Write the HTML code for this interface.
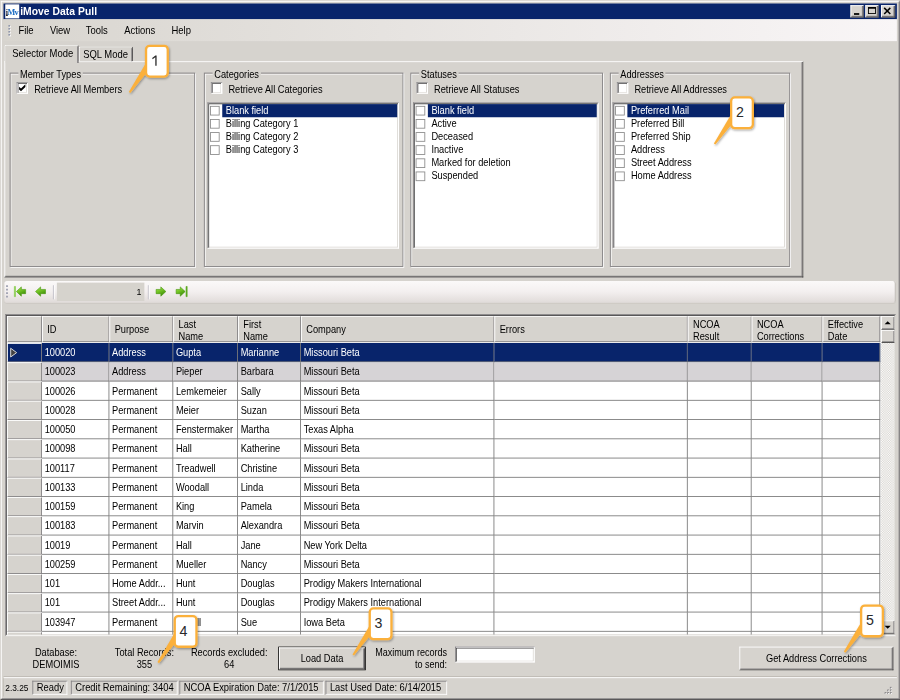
<!DOCTYPE html>
<html>
<head>
<meta charset="utf-8">
<title>iMove Data Pull</title>
<style>
html,body{margin:0;padding:0;}
body{width:900px;height:700px;overflow:hidden;background:#d6d3ce;position:relative;}
#w{position:absolute;left:0;top:0;width:1029px;height:800px;transform:scale(0.875);transform-origin:0 0;background:#d6d3ce;overflow:hidden;
 font-family:"Liberation Sans",sans-serif;font-size:11.5px;letter-spacing:0;color:#000;}
#ov{position:absolute;left:0;top:0;width:900px;height:700px;overflow:hidden;}
.a{position:absolute;white-space:nowrap;}
.t{position:absolute;white-space:nowrap;line-height:13px;transform:scaleX(0.92);transform-origin:0 50%;}
.tah{font-size:12px;transform:scaleX(0.9);}
/* 3d borders */
.raised{box-sizing:border-box;border-left:1px solid #fff;border-top:1px solid #fff;border-right:1px solid #424142;border-bottom:1px solid #424142;box-shadow:inset -1px -1px 0 #848284;background:#d6d3ce;}
.sunken{box-sizing:border-box;border-left:1px solid #848284;border-top:1px solid #848284;border-right:1px solid #fff;border-bottom:1px solid #fff;box-shadow:inset 1px 1px 0 #424142, inset -1px -1px 0 #d6d3ce;background:#fff;}
#title{left:4px;top:4px;width:1021px;height:18px;background:#08246b;}
#menu{left:4px;top:22px;width:1021px;height:25px;background:linear-gradient(to right,#d8d5cf 0%,#f9f6f7 100%);}
.tab{position:absolute;box-sizing:border-box;background:#d6d3ce;border-left:1px solid #fff;border-top:1px solid #fff;border-right:1px solid #424142;border-radius:2px 2px 0 0;}
.tab i{position:absolute;right:0;top:1px;bottom:0;width:1px;background:#848284;}
.gb{position:absolute;box-sizing:border-box;border:1px solid #848284;box-shadow:1px 1px 0 #fff, inset 1px 1px 0 #fff;}
.gl{position:absolute;white-space:nowrap;line-height:13px;background:#d6d3ce;padding:0 2px;transform:scaleX(0.92);transform-origin:0 50%;}
.li{position:absolute;left:1px;right:1px;height:15px;}
.li b{position:absolute;left:1px;top:2px;width:11px;height:11px;box-sizing:border-box;border:1px solid #8c8c8c;background:#fff;}
.li span{position:absolute;left:19px;top:1px;line-height:13px;white-space:nowrap;transform:scaleX(0.92);transform-origin:0 50%;}
.li.sel em{position:absolute;left:15px;right:0;top:0;bottom:0;background:#08246b;}
.li.sel span{color:#fff;}
#nav{left:5px;top:321px;width:1019px;height:25px;border-radius:3px;background:linear-gradient(to bottom,#fbf9f9 0%,#f3efef 50%,#e0dbd9 100%);box-shadow:0 1px 0 #ccc8c2, inset -1.5px 0 0 #c9c5c0;}
#grid{left:6px;top:359px;width:1018px;height:368px;box-sizing:border-box;overflow:hidden;border-left:1px solid #848284;border-top:1px solid #848284;border-right:1px solid #d6d3ce;border-bottom:1px solid #fff;}
#gin{left:0;top:0;right:0;bottom:0;border-left:1px solid #424142;border-top:1px solid #424142;border-right:1px solid #d6d3ce;border-bottom:1px solid #d6d3ce;background:#fff;overflow:hidden;}
.hc{position:absolute;top:0;height:30px;box-sizing:border-box;background:#d6d3ce;border-left:1px solid #fff;border-top:1px solid #fff;border-right:1px solid #848284;border-bottom:1px solid #848284;}
.hc .t{left:5px;line-height:13px;}
.row{position:absolute;left:0;width:998px;height:22px;}
.rh{position:absolute;left:0;top:0;width:40px;height:22px;box-sizing:border-box;background:#d6d3ce;border-left:1px solid #fff;border-top:1px solid #fff;border-right:1px solid #848284;border-bottom:1px solid #848284;}
.c{position:absolute;top:0;height:22px;box-sizing:border-box;border-right:1px solid #7b7b7b;border-bottom:1px solid #7b7b7b;}
.c span{position:absolute;left:3.3px;top:5.4px;line-height:13px;white-space:nowrap;transform:scaleX(0.92);transform-origin:0 50%;}
.row.sel .c{background:#08246b;color:#fff;}
.row.sel .rh{background:#08246b;}
.row.alt .c{background:#d6d3d6;}
#sb{right:-0.6px;top:0;width:16px;bottom:0;background:repeating-conic-gradient(#fff 0% 25%, #d6d3ce 0% 50%) 0 0/2px 2px;}
.ctr{position:absolute;text-align:center;line-height:13px;white-space:nowrap;transform:scaleX(0.92);transform-origin:50% 50%;}
#status{left:4px;top:774px;width:1021px;height:22px;border-top:1px solid #fff;box-shadow:0 -1px 0 #b4b0a8;}
.sp{position:absolute;top:2.5px;height:16px;box-sizing:border-box;border-left:1px solid #848284;border-top:1px solid #848284;border-right:1px solid #fff;border-bottom:1px solid #fff;}
svg{position:absolute;overflow:visible;}
</style>
</head>
<body>
<div id="w">
<div class="a" style="left:0;top:0;width:1029px;height:800px;box-sizing:border-box;border-left:1px solid #d6d3ce;border-top:1px solid #d6d3ce;border-right:1px solid #424142;border-bottom:1px solid #424142;"></div>
<div class="a" style="left:1px;top:1px;width:1027px;height:798px;box-sizing:border-box;border-left:1px solid #fff;border-top:1px solid #fff;border-right:1px solid #848284;border-bottom:1px solid #848284;"></div>
<div class="a" id="title">
 <div class="a" style="left:2px;top:1px;width:16px;height:16px;background:#fff;"></div>
 <svg style="left:2px;top:1px" width="16" height="16"><text x="0.6" y="12.3" font-family="Liberation Serif, serif" font-weight="bold" font-size="9.4" fill="#1c6cc4" letter-spacing="-0.7"><tspan fill="#223">i</tspan>Mv</text><rect x="0.8" y="12.2" width="2.2" height="1" fill="#111"/></svg>
 <div class="t" style="left:19px;top:2.5px;color:#fff;font-weight:bold;font-size:11.8px;letter-spacing:0.05px;transform:none;">iMove Data Pull</div>
 <div class="a raised" style="left:968px;top:2px;width:15px;height:13.5px;"></div>
 <div class="a raised" style="left:985px;top:2px;width:15px;height:13.5px;"></div>
 <div class="a raised" style="left:1002.5px;top:2px;width:16px;height:13.5px;"></div>
 <svg style="left:968px;top:2px" width="52" height="14"><rect x="4" y="9" width="6" height="2" fill="#000"/><rect x="20.5" y="2.5" width="8" height="7" fill="none" stroke="#000" stroke-width="1"/><rect x="20" y="2" width="9" height="2" fill="#000"/><path d="M38.5 3 L45.5 10 M45.5 3 L38.5 10" stroke="#000" stroke-width="1.7" fill="none"/></svg>
</div>
<div class="a" id="menu">
 <svg style="left:0;top:0" width="12" height="25"><g fill="#fff"><rect x="6.6" y="7.6" width="1.8" height="1.8"/><rect x="6.6" y="11" width="1.8" height="1.8"/><rect x="6.6" y="14.4" width="1.8" height="1.8"/><rect x="6.6" y="17.8" width="1.8" height="1.8"/></g><g fill="#8f96aa"><rect x="5.6" y="6.6" width="1.9" height="1.9"/><rect x="5.6" y="10" width="1.9" height="1.9"/><rect x="5.6" y="13.4" width="1.9" height="1.9"/><rect x="5.6" y="16.8" width="1.9" height="1.9"/></g></svg>
 <div class="t tah" style="left:16.5px;top:7px">File</div>
 <div class="t tah" style="left:52.5px;top:7px">View</div>
 <div class="t tah" style="left:93.5px;top:7px">Tools</div>
 <div class="t tah" style="left:138px;top:7px">Actions</div>
 <div class="t tah" style="left:192px;top:7px">Help</div>
</div>
<div class="a" style="left:5px;top:70px;width:913px;height:247px;box-sizing:border-box;border-left:1px solid #fff;border-top:1px solid #fff;border-right:1px solid #424142;border-bottom:1px solid #424142;box-shadow:inset -1px -1px 0 #848284;"></div>
<div class="tab" style="left:5px;top:51px;width:85px;height:21px;"><i></i><div class="t tah" style="left:7.5px;top:3px">Selector Mode</div></div>
<div class="tab" style="left:90px;top:53px;width:62px;height:17px;"><i></i><div class="t tah" style="left:4px;top:2px">SQL Mode</div></div>
<div class="gb" style="left:11px;top:83px;width:212px;height:222px"></div>
<div class="gl" style="left:21px;top:79px">Member Types</div>
<div class="a sunken" style="left:19px;top:94px;width:13px;height:13px;"></div>
<svg style="left:19px;top:94px" width="13" height="13"><path d="M2.8 5 L5 7.2 L10 2.2 L10 5.4 L5 10.4 L2.8 8.2 Z" fill="#000"/></svg>
<div class="t" style="left:39px;top:96px">Retrieve All Members</div>
<div class="gb" style="left:233px;top:83px;width:228px;height:222px"></div>
<div class="gl" style="left:243px;top:79px">Categories</div>
<div class="a sunken" style="left:240.5px;top:94px;width:13px;height:13px;"></div>
<div class="t" style="left:261px;top:96px">Retrieve All Categories</div>
<div class="a sunken" style="left:237px;top:117px;width:219px;height:167px">
 <div class="li sel" style="top:1px"><em></em><b></b><span>Blank field</span></div>
 <div class="li" style="top:16px"><b></b><span>Billing Category 1</span></div>
 <div class="li" style="top:31px"><b></b><span>Billing Category 2</span></div>
 <div class="li" style="top:46px"><b></b><span>Billing Category 3</span></div>
</div>
<div class="gb" style="left:469px;top:83px;width:220px;height:222px"></div>
<div class="gl" style="left:479px;top:79px">Statuses</div>
<div class="a sunken" style="left:476px;top:94px;width:13px;height:13px;"></div>
<div class="t" style="left:496px;top:96px">Retrieve All Statuses</div>
<div class="a sunken" style="left:472px;top:117px;width:212px;height:167px">
 <div class="li sel" style="top:1px"><em></em><b></b><span>Blank field</span></div>
 <div class="li" style="top:16px"><b></b><span>Active</span></div>
 <div class="li" style="top:31px"><b></b><span>Deceased</span></div>
 <div class="li" style="top:46px"><b></b><span>Inactive</span></div>
 <div class="li" style="top:61px"><b></b><span>Marked for deletion</span></div>
 <div class="li" style="top:76px"><b></b><span>Suspended</span></div>
</div>
<div class="gb" style="left:697px;top:83px;width:206px;height:222px"></div>
<div class="gl" style="left:707px;top:79px">Addresses</div>
<div class="a sunken" style="left:704.5px;top:94px;width:13px;height:13px;"></div>
<div class="t" style="left:725px;top:96px">Retrieve All Addresses</div>
<div class="a sunken" style="left:700px;top:117px;width:198px;height:167px">
 <div class="li sel" style="top:1px"><em></em><b></b><span>Preferred Mail</span></div>
 <div class="li" style="top:16px"><b></b><span>Preferred Bill</span></div>
 <div class="li" style="top:31px"><b></b><span>Preferred Ship</span></div>
 <div class="li" style="top:46px"><b></b><span>Address</span></div>
 <div class="li" style="top:61px"><b></b><span>Street Address</span></div>
 <div class="li" style="top:76px"><b></b><span>Home Address</span></div>
</div>
<div class="a" id="nav">
 <div class="a" style="left:60px;top:2px;width:100px;height:21px;background:#d6d3cd;"></div>
 <div class="t" style="left:151px;top:6px;font-size:11px">1</div>
 <svg style="left:0;top:0" width="230" height="25">
 <g fill="#9a9cae"><rect x="2" y="5" width="2" height="2"/><rect x="2" y="9" width="2" height="2"/><rect x="2" y="13" width="2" height="2"/><rect x="2" y="17" width="2" height="2"/></g>
 <rect x="55.5" y="5" width="1" height="16" fill="#b4b2bc"/><rect x="56.5" y="5" width="1" height="16" fill="#fff"/>
 <rect x="164" y="5" width="1" height="16" fill="#b4b2bc"/><rect x="165" y="5" width="1" height="16" fill="#fff"/>
 <defs><linearGradient id="gg" x1="0" y1="0" x2="0.5" y2="1"><stop offset="0" stop-color="#a4e25a"/><stop offset="0.45" stop-color="#78c828"/><stop offset="1" stop-color="#3c8c08"/></linearGradient></defs>
 <g fill="url(#gg)" stroke="#4a9810" stroke-width="0.7" stroke-linejoin="round">
  <rect x="11.4" y="6.4" width="1.3" height="11.6" fill="#86cc4a" stroke="#86cc4a"/>
  <path d="M13.8 12.2 L19.4 6.9 L19.4 9.8 L24.3 9.8 L24.3 14.6 L19.4 14.6 L19.4 17.5 Z"/>
  <path d="M35.6 12.2 L41.4 6.9 L41.4 9.8 L47 9.8 L47 14.6 L41.4 14.6 L41.4 17.5 Z"/>
  <path d="M184.6 12.2 L178.8 6.9 L178.8 9.8 L173.4 9.8 L173.4 14.6 L178.8 14.6 L178.8 17.5 Z"/>
  <path d="M206.6 12.2 L201 6.9 L201 9.8 L196.3 9.8 L196.3 14.6 L201 14.6 L201 17.5 Z"/>
  <rect x="207.6" y="6.4" width="1.3" height="11.6" fill="#5aa820" stroke="#5aa820"/>
 </g></svg>
</div>
<div class="a" id="grid"><div class="a" id="gin">
 <div class="hc" style="left:0;width:40px"></div>
 <div class="hc" style="left:40px;width:77px"><div class="t" style="top:9px">ID</div></div>
 <div class="hc" style="left:117px;width:73px"><div class="t" style="top:9px">Purpose</div></div>
 <div class="hc" style="left:190px;width:74px"><div class="t" style="top:2.5px">Last<br>Name</div></div>
 <div class="hc" style="left:264px;width:72px"><div class="t" style="top:2.5px">First<br>Name</div></div>
 <div class="hc" style="left:336px;width:221px"><div class="t" style="top:9px">Company</div></div>
 <div class="hc" style="left:557px;width:221px"><div class="t" style="top:9px">Errors</div></div>
 <div class="hc" style="left:778px;width:73px"><div class="t" style="top:2.5px">NCOA<br>Result</div></div>
 <div class="hc" style="left:851px;width:81px"><div class="t" style="top:2.5px">NCOA<br>Corrections</div></div>
 <div class="hc" style="left:932px;width:66px"><div class="t" style="top:2.5px">Effective<br>Date</div></div>
 <div class="row sel" style="top:30.5px"><div class="rh"></div><div class="c" style="left:40px;width:77px"><span>100020</span></div><div class="c" style="left:117px;width:73px"><span>Address</span></div><div class="c" style="left:190px;width:74px"><span>Gupta</span></div><div class="c" style="left:264px;width:72px"><span>Marianne</span></div><div class="c" style="left:336px;width:221px"><span>Missouri Beta</span></div><div class="c" style="left:557px;width:221px"></div><div class="c" style="left:778px;width:73px"></div><div class="c" style="left:851px;width:81px"></div><div class="c" style="left:932px;width:66px"></div></div>
 <div class="row alt" style="top:52.5px"><div class="rh"></div><div class="c" style="left:40px;width:77px"><span>100023</span></div><div class="c" style="left:117px;width:73px"><span>Address</span></div><div class="c" style="left:190px;width:74px"><span>Pieper</span></div><div class="c" style="left:264px;width:72px"><span>Barbara</span></div><div class="c" style="left:336px;width:221px"><span>Missouri Beta</span></div><div class="c" style="left:557px;width:221px"></div><div class="c" style="left:778px;width:73px"></div><div class="c" style="left:851px;width:81px"></div><div class="c" style="left:932px;width:66px"></div></div>
 <div class="row" style="top:74.5px"><div class="rh"></div><div class="c" style="left:40px;width:77px"><span>100026</span></div><div class="c" style="left:117px;width:73px"><span>Permanent</span></div><div class="c" style="left:190px;width:74px"><span>Lemkemeier</span></div><div class="c" style="left:264px;width:72px"><span>Sally</span></div><div class="c" style="left:336px;width:221px"><span>Missouri Beta</span></div><div class="c" style="left:557px;width:221px"></div><div class="c" style="left:778px;width:73px"></div><div class="c" style="left:851px;width:81px"></div><div class="c" style="left:932px;width:66px"></div></div>
 <div class="row" style="top:96.5px"><div class="rh"></div><div class="c" style="left:40px;width:77px"><span>100028</span></div><div class="c" style="left:117px;width:73px"><span>Permanent</span></div><div class="c" style="left:190px;width:74px"><span>Meier</span></div><div class="c" style="left:264px;width:72px"><span>Suzan</span></div><div class="c" style="left:336px;width:221px"><span>Missouri Beta</span></div><div class="c" style="left:557px;width:221px"></div><div class="c" style="left:778px;width:73px"></div><div class="c" style="left:851px;width:81px"></div><div class="c" style="left:932px;width:66px"></div></div>
 <div class="row" style="top:118.5px"><div class="rh"></div><div class="c" style="left:40px;width:77px"><span>100050</span></div><div class="c" style="left:117px;width:73px"><span>Permanent</span></div><div class="c" style="left:190px;width:74px"><span>Fenstermaker</span></div><div class="c" style="left:264px;width:72px"><span>Martha</span></div><div class="c" style="left:336px;width:221px"><span>Texas Alpha</span></div><div class="c" style="left:557px;width:221px"></div><div class="c" style="left:778px;width:73px"></div><div class="c" style="left:851px;width:81px"></div><div class="c" style="left:932px;width:66px"></div></div>
 <div class="row" style="top:140.5px"><div class="rh"></div><div class="c" style="left:40px;width:77px"><span>100098</span></div><div class="c" style="left:117px;width:73px"><span>Permanent</span></div><div class="c" style="left:190px;width:74px"><span>Hall</span></div><div class="c" style="left:264px;width:72px"><span>Katherine</span></div><div class="c" style="left:336px;width:221px"><span>Missouri Beta</span></div><div class="c" style="left:557px;width:221px"></div><div class="c" style="left:778px;width:73px"></div><div class="c" style="left:851px;width:81px"></div><div class="c" style="left:932px;width:66px"></div></div>
 <div class="row" style="top:162.5px"><div class="rh"></div><div class="c" style="left:40px;width:77px"><span>100117</span></div><div class="c" style="left:117px;width:73px"><span>Permanent</span></div><div class="c" style="left:190px;width:74px"><span>Treadwell</span></div><div class="c" style="left:264px;width:72px"><span>Christine</span></div><div class="c" style="left:336px;width:221px"><span>Missouri Beta</span></div><div class="c" style="left:557px;width:221px"></div><div class="c" style="left:778px;width:73px"></div><div class="c" style="left:851px;width:81px"></div><div class="c" style="left:932px;width:66px"></div></div>
 <div class="row" style="top:184.5px"><div class="rh"></div><div class="c" style="left:40px;width:77px"><span>100133</span></div><div class="c" style="left:117px;width:73px"><span>Permanent</span></div><div class="c" style="left:190px;width:74px"><span>Woodall</span></div><div class="c" style="left:264px;width:72px"><span>Linda</span></div><div class="c" style="left:336px;width:221px"><span>Missouri Beta</span></div><div class="c" style="left:557px;width:221px"></div><div class="c" style="left:778px;width:73px"></div><div class="c" style="left:851px;width:81px"></div><div class="c" style="left:932px;width:66px"></div></div>
 <div class="row" style="top:206.5px"><div class="rh"></div><div class="c" style="left:40px;width:77px"><span>100159</span></div><div class="c" style="left:117px;width:73px"><span>Permanent</span></div><div class="c" style="left:190px;width:74px"><span>King</span></div><div class="c" style="left:264px;width:72px"><span>Pamela</span></div><div class="c" style="left:336px;width:221px"><span>Missouri Beta</span></div><div class="c" style="left:557px;width:221px"></div><div class="c" style="left:778px;width:73px"></div><div class="c" style="left:851px;width:81px"></div><div class="c" style="left:932px;width:66px"></div></div>
 <div class="row" style="top:228.5px"><div class="rh"></div><div class="c" style="left:40px;width:77px"><span>100183</span></div><div class="c" style="left:117px;width:73px"><span>Permanent</span></div><div class="c" style="left:190px;width:74px"><span>Marvin</span></div><div class="c" style="left:264px;width:72px"><span>Alexandra</span></div><div class="c" style="left:336px;width:221px"><span>Missouri Beta</span></div><div class="c" style="left:557px;width:221px"></div><div class="c" style="left:778px;width:73px"></div><div class="c" style="left:851px;width:81px"></div><div class="c" style="left:932px;width:66px"></div></div>
 <div class="row" style="top:250.5px"><div class="rh"></div><div class="c" style="left:40px;width:77px"><span>10019</span></div><div class="c" style="left:117px;width:73px"><span>Permanent</span></div><div class="c" style="left:190px;width:74px"><span>Hall</span></div><div class="c" style="left:264px;width:72px"><span>Jane</span></div><div class="c" style="left:336px;width:221px"><span>New York Delta</span></div><div class="c" style="left:557px;width:221px"></div><div class="c" style="left:778px;width:73px"></div><div class="c" style="left:851px;width:81px"></div><div class="c" style="left:932px;width:66px"></div></div>
 <div class="row" style="top:272.5px"><div class="rh"></div><div class="c" style="left:40px;width:77px"><span>100259</span></div><div class="c" style="left:117px;width:73px"><span>Permanent</span></div><div class="c" style="left:190px;width:74px"><span>Mueller</span></div><div class="c" style="left:264px;width:72px"><span>Nancy</span></div><div class="c" style="left:336px;width:221px"><span>Missouri Beta</span></div><div class="c" style="left:557px;width:221px"></div><div class="c" style="left:778px;width:73px"></div><div class="c" style="left:851px;width:81px"></div><div class="c" style="left:932px;width:66px"></div></div>
 <div class="row" style="top:294.5px"><div class="rh"></div><div class="c" style="left:40px;width:77px"><span>101</span></div><div class="c" style="left:117px;width:73px"><span>Home Addr...</span></div><div class="c" style="left:190px;width:74px"><span>Hunt</span></div><div class="c" style="left:264px;width:72px"><span>Douglas</span></div><div class="c" style="left:336px;width:221px"><span>Prodigy Makers International</span></div><div class="c" style="left:557px;width:221px"></div><div class="c" style="left:778px;width:73px"></div><div class="c" style="left:851px;width:81px"></div><div class="c" style="left:932px;width:66px"></div></div>
 <div class="row" style="top:316.5px"><div class="rh"></div><div class="c" style="left:40px;width:77px"><span>101</span></div><div class="c" style="left:117px;width:73px"><span>Street Addr...</span></div><div class="c" style="left:190px;width:74px"><span>Hunt</span></div><div class="c" style="left:264px;width:72px"><span>Douglas</span></div><div class="c" style="left:336px;width:221px"><span>Prodigy Makers International</span></div><div class="c" style="left:557px;width:221px"></div><div class="c" style="left:778px;width:73px"></div><div class="c" style="left:851px;width:81px"></div><div class="c" style="left:932px;width:66px"></div></div>
 <div class="row" style="top:338.5px"><div class="rh"></div><div class="c" style="left:40px;width:77px"><span>103947</span></div><div class="c" style="left:117px;width:73px"><span>Permanent</span></div><div class="c" style="left:190px;width:74px"><span>Savell</span></div><div class="c" style="left:264px;width:72px"><span>Sue</span></div><div class="c" style="left:336px;width:221px"><span>Iowa Beta</span></div><div class="c" style="left:557px;width:221px"></div><div class="c" style="left:778px;width:73px"></div><div class="c" style="left:851px;width:81px"></div><div class="c" style="left:932px;width:66px"></div></div>
 <div class="row" style="top:360.5px"><div class="rh"></div><div class="c" style="left:40px;width:77px"></div><div class="c" style="left:117px;width:73px"></div><div class="c" style="left:190px;width:74px"></div><div class="c" style="left:264px;width:72px"></div><div class="c" style="left:336px;width:221px"></div><div class="c" style="left:557px;width:221px"></div><div class="c" style="left:778px;width:73px"></div><div class="c" style="left:851px;width:81px"></div><div class="c" style="left:932px;width:66px"></div></div>
 <svg style="left:0;top:30.5px" width="40" height="22"><path d="M4.2 6 L11 11 L4.2 16 Z" fill="#424142" stroke="#dcdcdc" stroke-width="1.1" stroke-linejoin="miter"/></svg>
 <div class="a" id="sb"><div class="a raised" style="left:0;top:0;width:16px;height:16px"></div><div class="a raised" style="left:0;top:16px;width:16px;height:15px"></div><div class="a raised" style="left:0;bottom:0;width:16px;height:16px"></div><svg style="left:0;top:0" width="16" height="16"><path d="M4 9.5 L11 9.5 L7.5 6 Z" fill="#000"/></svg><svg style="left:0;bottom:0" width="16" height="16"><path d="M4 6 L11 6 L7.5 9.5 Z" fill="#000"/></svg></div>
</div></div>
<div class="ctr" style="left:24px;top:740px;width:80px">Database:<br>DEMOIMIS</div>
<div class="ctr" style="left:114.5px;top:740px;width:100px">Total Records:<br>355</div>
<div class="ctr" style="left:211.5px;top:740px;width:100px">Records excluded:<br>64</div>
<div class="a" style="left:318px;top:739px;width:100px;height:27px;box-sizing:border-box;border:1px solid #000;"><div class="a raised" style="left:0;top:0;right:0;bottom:0"></div><div class="ctr" style="left:0;right:0;top:6px">Load Data</div></div>
<div class="ctr" style="left:411px;top:740px;width:100px;text-align:right;transform-origin:100% 50%;transform:scaleX(0.9)">Maximum records<br>to send:</div>
<div class="a sunken" style="left:520px;top:739px;width:91px;height:18px"></div>
<div class="a raised" style="left:845px;top:739px;width:176px;height:27px"><div class="ctr" style="left:0;right:0;top:6.5px">Get Address Corrections</div></div>
<div class="a" id="status">
 <div class="t" style="left:2px;top:5px;font-size:10.6px;transform:scaleX(0.9)">2.3.25</div>
 <div class="sp" style="left:33px;width:40px"></div><div class="t tah" style="left:37.5px;top:4.5px;font-size:11.9px">Ready</div>
 <div class="sp" style="left:77px;width:122px"></div><div class="t tah" style="left:81.5px;top:4.5px;font-size:11.9px">Credit Remaining: 3404</div>
 <div class="sp" style="left:201px;width:165px"></div><div class="t tah" style="left:205.5px;top:4.5px;font-size:11.9px">NCOA Expiration Date: 7/1/2015</div>
 <div class="sp" style="left:368px;width:139px"></div><div class="t tah" style="left:372.5px;top:4.5px;font-size:11.9px">Last Used Date: 6/14/2015</div>
 <svg style="left:1003px;top:8px" width="14" height="14"><g fill="#848284"><rect x="10" y="2" width="2" height="2"/><rect x="7" y="5" width="2" height="2"/><rect x="10" y="5" width="2" height="2"/><rect x="4" y="8" width="2" height="2"/><rect x="7" y="8" width="2" height="2"/><rect x="10" y="8" width="2" height="2"/></g><g fill="#fff"><rect x="11" y="3" width="1.3" height="1.3"/><rect x="8" y="6" width="1.3" height="1.3"/><rect x="11" y="6" width="1.3" height="1.3"/><rect x="5" y="9" width="1.3" height="1.3"/><rect x="8" y="9" width="1.3" height="1.3"/><rect x="11" y="9" width="1.3" height="1.3"/></g></svg>
</div>
</div>
<div id="ov"><svg style="left:0;top:0" width="900" height="700"><defs><filter id="sh" x="-1" y="-0.5" width="3" height="2"><feDropShadow dx="0.8" dy="1.2" stdDeviation="0.9" flood-color="#000" flood-opacity="0.35"/></filter></defs>
<g transform="translate(144.9,44.7)">
  <g filter="url(#sh)"><polygon points="1.6,17.2 1.6,28.3 -14.6,48.3 -16.1,47.2" fill="#fbb03b"/>
  <rect x="1.15" y="1.15" width="21.7" height="30.7" rx="3.6" ry="3.6" fill="#fff" stroke="#fbb03b" stroke-width="2.3"/></g>
  <path d="M7.3 13.4 L10.5 10.7 L11.7 10.7 L11.7 21 L10.4 21 L10.4 12.5 L7.7 14.6 Z" fill="#2a2a2a"/>
 </g>
<g transform="translate(730,96.3)">
  <g filter="url(#sh)"><polygon points="1.6,17.2 1.6,28.3 -14.6,48.3 -16.1,47.2" fill="#fbb03b"/>
  <rect x="1.15" y="1.15" width="21.7" height="30.7" rx="3.6" ry="3.6" fill="#fff" stroke="#fbb03b" stroke-width="2.3"/></g>
  <text x="9.9" y="21" text-anchor="middle" font-family="Liberation Sans, sans-serif" font-size="14.2" fill="#2a2a2a">2</text>
 </g>
<g transform="translate(368.6,607.3)">
  <g filter="url(#sh)"><polygon points="1.6,17.2 1.6,28.3 -14.6,48.3 -16.1,47.2" fill="#fbb03b"/>
  <rect x="1.15" y="1.15" width="21.7" height="30.7" rx="3.6" ry="3.6" fill="#fff" stroke="#fbb03b" stroke-width="2.3"/></g>
  <text x="9.9" y="21" text-anchor="middle" font-family="Liberation Sans, sans-serif" font-size="14.2" fill="#2a2a2a">3</text>
 </g>
<g transform="translate(173.6,614.9)">
  <g filter="url(#sh)"><polygon points="1.6,17.2 1.6,28.3 -14.6,48.3 -16.1,47.2" fill="#fbb03b"/>
  <rect x="1.15" y="1.15" width="21.7" height="30.7" rx="3.6" ry="3.6" fill="#fff" stroke="#fbb03b" stroke-width="2.3"/></g>
  <text x="9.9" y="21" text-anchor="middle" font-family="Liberation Sans, sans-serif" font-size="14.2" fill="#2a2a2a">4</text>
 </g>
<g transform="translate(860,604.4)">
  <g filter="url(#sh)"><polygon points="1.6,17.2 1.6,28.3 -14.6,48.3 -16.1,47.2" fill="#fbb03b"/>
  <rect x="1.15" y="1.15" width="21.7" height="30.7" rx="3.6" ry="3.6" fill="#fff" stroke="#fbb03b" stroke-width="2.3"/></g>
  <text x="9.9" y="21" text-anchor="middle" font-family="Liberation Sans, sans-serif" font-size="14.2" fill="#2a2a2a">5</text>
 </g>
</svg></div>
</body>
</html>
